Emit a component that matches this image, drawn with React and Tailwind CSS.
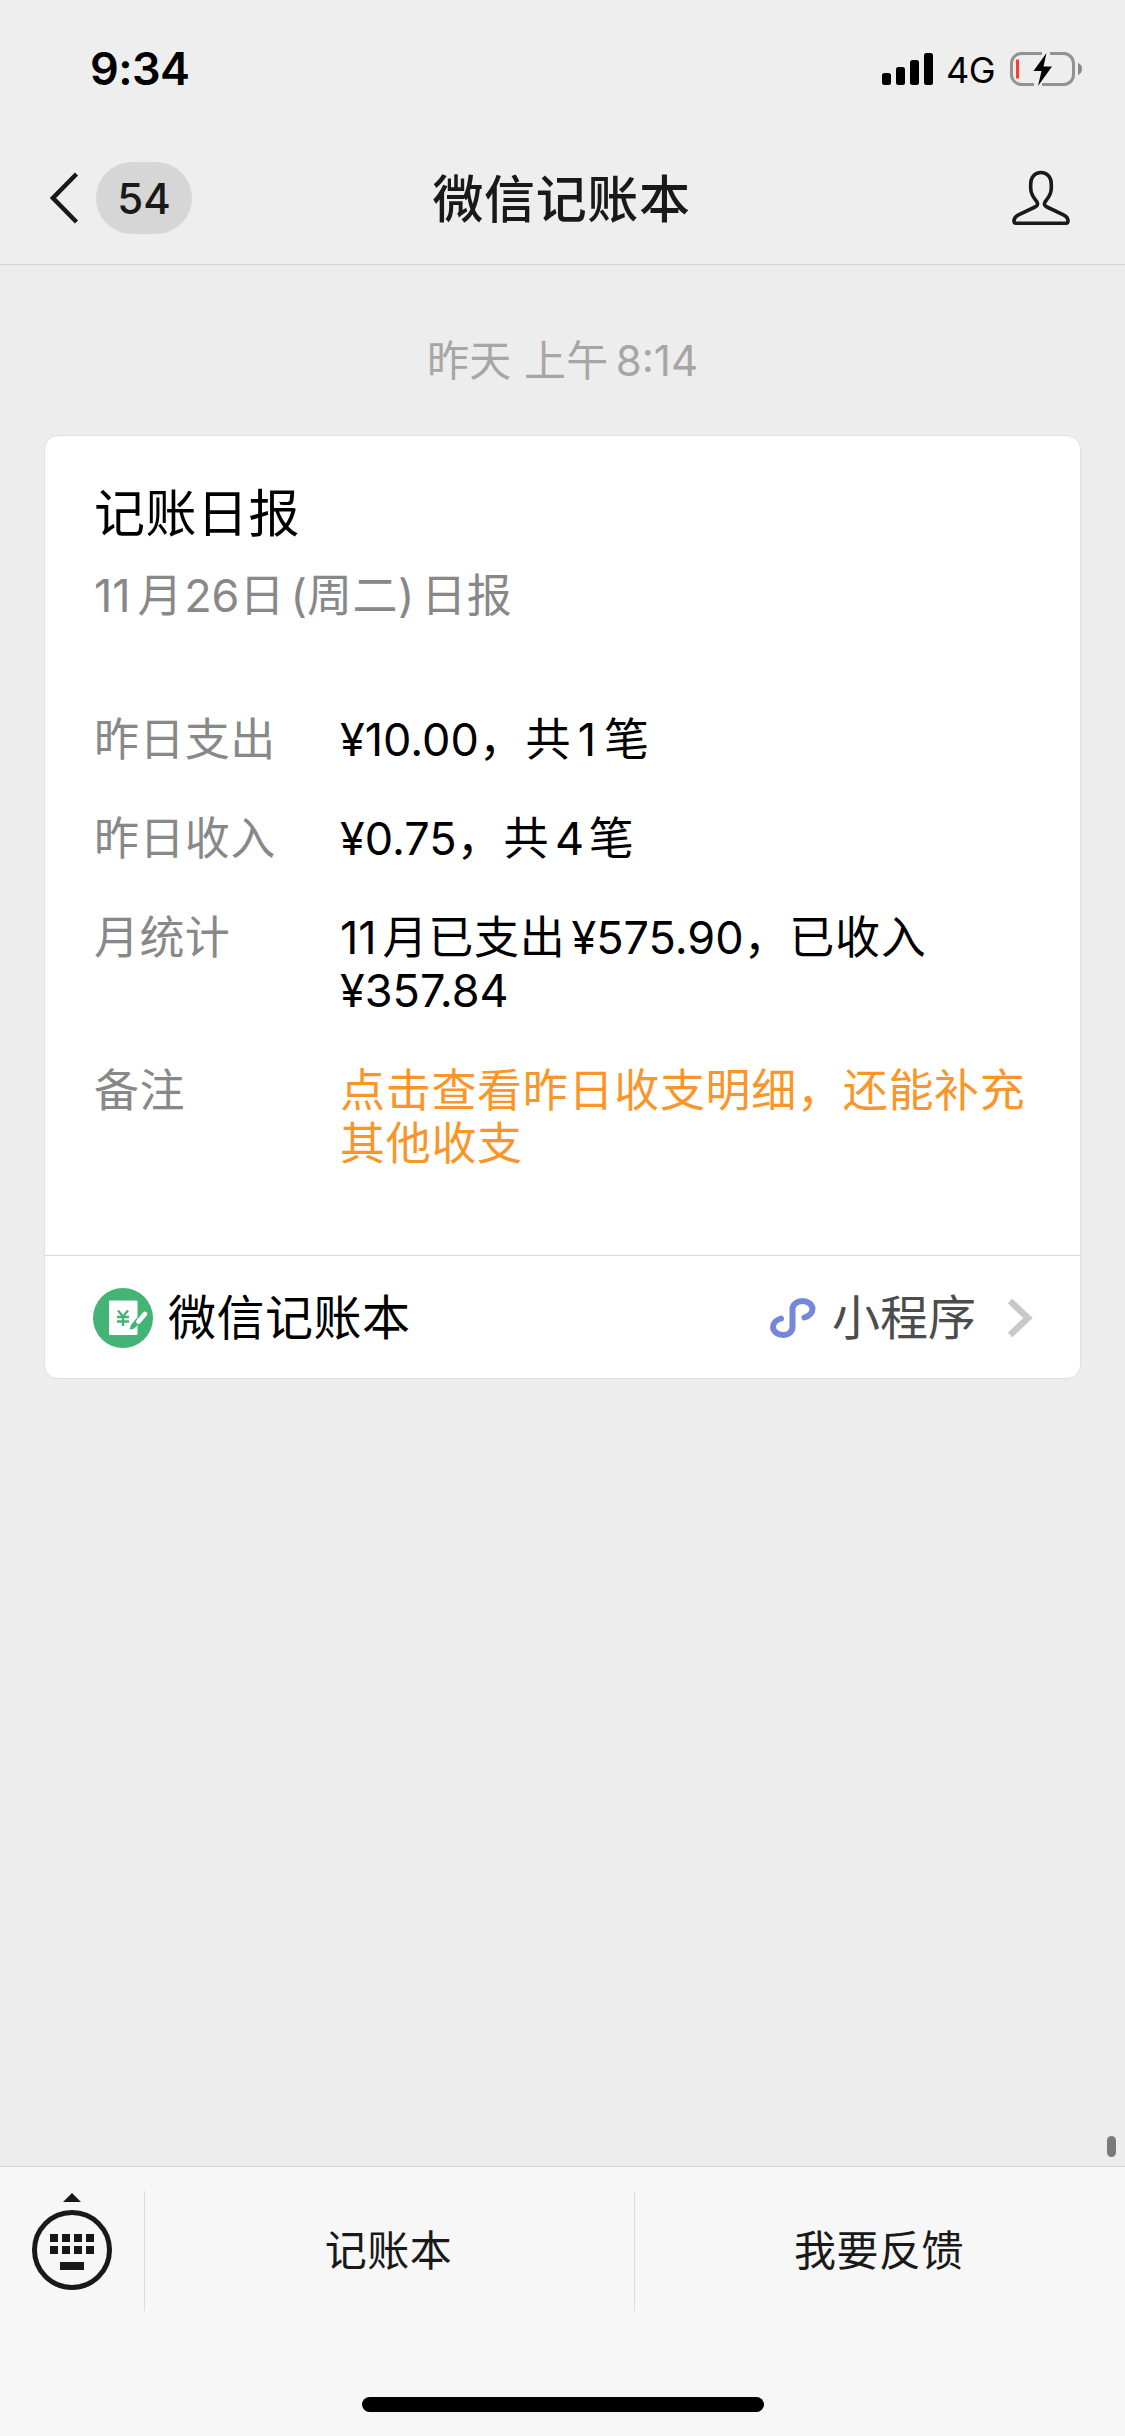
const rows = [
  {
    label: "昨日支出",
    box: "h-[99px]",
    value: <><Latin>¥10.00</Latin>，<span className="ml-[1px]">共</span><Latin className="ml-[6.5px] mr-[8px]">1</Latin>笔</>,
  },
  {
    label: "昨日收入",
    box: "h-[99px]",
    value: <><Latin>¥0.75</Latin>，<span className="ml-[1px]">共</span><Latin className="ml-[6px] mr-[4.5px]">4</Latin>笔</>,
  },
  {
    label: "月统计",
    box: "h-[153px]",
    value: <><Latin className="mr-[6px]">11</Latin>月已支出<Latin className="ml-[6px]">¥575.90</Latin>，已收入<br /><Latin>¥357.84</Latin></>,
  },
  {
    label: "备注",
    box: "h-[144px]",
    accent: true,
    value: <>点击查看昨日收支明细，还能补充<br />其他收支</>,
  },
];

function Latin({ className = "", children }) {
  return <span className={`tracking-normal ${className}`}>{children}</span>;
}

function StatusBar() {
  return (
    <div className="flex h-[132px] items-start justify-between pl-[90px] pr-[42px] pt-[44px]">
      <div className="text-[45px] font-semibold leading-[50px] tracking-[-0.6px] text-black">9:34</div>
      <div className="flex h-[50px] items-center">
        <svg width="51" height="32" viewBox="0 0 51 32" fill="#000">
          <rect x="0" y="20" width="9" height="12" rx="2.5" />
          <rect x="14" y="14" width="9" height="18" rx="2.5" />
          <rect x="28" y="7" width="9" height="25" rx="2.5" />
          <rect x="42" y="0" width="9" height="32" rx="2.5" />
        </svg>
        <span className="ml-[13px] w-[63px] whitespace-nowrap pt-[2px] text-[36px] leading-[50px] tracking-[-0.6px] text-black">4G</span>
        <svg width="74" height="36" viewBox="0 0 74 36">
          <path d="M33 2.500H13A10 10 0 0 0 2.500 12.500V23.500A10 10 0 0 0 13 33.500H25M33 33.500H55A10 10 0 0 0 64.500 23.500V12.500A10 10 0 0 0 55 2.500H41" fill="none" stroke="#929292" strokeWidth="3" />
          <path d="M69 12q4 1.500 4 6t-4 6z" fill="#8a8a8a" />
          <rect x="7" y="8.500" width="3" height="19" rx="0.500" fill="#ff3b30" />
          <path d="M37.500 2L24.500 20h8l-3.500 15L43 15.500h-8.500z" fill="#000" />
        </svg>
      </div>
    </div>
  );
}

function NavBar() {
  return (
    <div className="grid h-[132px] grid-cols-3 items-center pl-[50px] pr-[55px]">
      <div className="flex items-center">
        <svg width="29" height="52" viewBox="0 0 29 52" fill="none" stroke="#191919" strokeWidth="4.500">
          <path d="M26.500 2L3 26l23.500 24" />
        </svg>
        <span className="ml-[17px] flex h-[72px] w-[96px] items-center justify-center rounded-full bg-[#d5d6d5] text-[42px] font-medium text-[#191919]">54</span>
      </div>
      <h1 className="whitespace-nowrap pl-[3px] pt-[2px] text-center text-[51px] font-medium leading-none tracking-[0.6px] text-[#191919]">微信记账本</h1>
      <svg className="justify-self-end" width="58" height="56" viewBox="0 0 58 56" fill="none" stroke="#191919" strokeWidth="3.600" strokeLinejoin="round">
        <path d="M29 2.500C22.500 2.500 18.700 7.500 18.700 14V18C18.700 26 23 28.500 25 32C26.300 34.500 25.300 36 22 37.500L6.500 44.800C3 46.500 2 47.800 2 51C2 52.800 2.300 53.300 4 53.300H54C55.700 53.300 56 52.800 56 51C56 47.800 55 46.500 51.500 44.800L36 37.500C32.700 36 31.700 34.500 33 32C35 28.500 39.300 26 39.300 18V14C39.300 7.500 35.500 2.500 29 2.500Z" />
      </svg>
    </div>
  );
}

function BookLogo() {
  return (
    <svg width="60" height="60" viewBox="0 0 60 60">
      <circle cx="30" cy="30" r="30" fill="#43b376" />
      <rect x="16" y="12.500" width="28.500" height="34.500" rx="1" fill="#fff" />
      <path d="M25 22.500l5 6l5-6M24 29h12M24 33.500h12M30 28.500v9.500" fill="none" stroke="#43b376" strokeWidth="2.300" />
      <path d="M36.500 41.500l1.500-4.500L44.500 29v8.500L40.500 41z" fill="#43b376" />
      <path d="M45.500 33.500l6.500-7.500" stroke="#fff" strokeWidth="4.800" strokeLinecap="round" />
    </svg>
  );
}

export default function App() {
  return (
    <div className="flex h-[2436px] w-[1125px] flex-col overflow-hidden bg-[#ededed] font-['Inter','Noto_Sans_CJK_SC',sans-serif]">
      <header className="h-[265px] border-b border-[#d3d3d3] bg-[#eeeeee]">
        <StatusBar />
        <NavBar />
      </header>

      <main className="relative grow px-[44px]">
        <div className="flex h-[170px] items-center justify-center pt-[22px] text-[42px] leading-none text-[#a6a6a6]">
          <p className="tracking-[0.4px]">昨天 上午<Latin className="ml-[7px]">8:14</Latin></p>
        </div>
        <section className="h-[944px] rounded-[14px] border border-[#e0e0e0] bg-white">
          <div className="h-[819px] px-[49px] pt-[45px]">
            <h2 className="text-[51px] leading-[66px] tracking-[0.5px] text-black">记账日报</h2>
            <p className="mt-[16px] text-[45px] leading-[66px] tracking-[0.5px] text-[#888888]">
              <Latin className="mr-[7px]">11</Latin>月<Latin className="ml-[1px]">26</Latin>日<Latin className="ml-[5.5px]">(</Latin>周二<Latin className="mr-[7px]">)</Latin>日报
            </p>
            <div className="mt-[84px] text-[45px] leading-[53px] tracking-[0.7px]">
              {rows.map((row) => (
                <div key={row.label} className={`flex ${row.box}`}>
                  <div className="w-[246px] shrink-0 tracking-[0.4px] text-[#888888]">{row.label}</div>
                  <div className={`whitespace-nowrap ${row.accent ? "text-[#fa9629]" : "text-black"}`}>{row.value}</div>
                </div>
              ))}
            </div>
          </div>
          <div className="flex h-[123px] items-center border-t border-[#d9d9d9] pl-[48px] pr-[47px] pt-[2px]">
            <BookLogo />
            <span className="ml-[15px] text-[48px] leading-none tracking-[0.5px] text-black">微信记账本</span>
            <svg className="ml-auto" width="46" height="40" viewBox="0 0 46 40" fill="none" stroke="#7586db" strokeWidth="6" strokeLinecap="round">
              <path d="M11 20.500C6 22 3 25.500 3 29c0 4.500 4.500 8 10 8s9.500-3.500 9.500-8V11c0-4.500 4.500-8 10-8s10 3.500 10 8c0 3.500-3 7-8 8.500" />
            </svg>
            <span className="ml-[16px] text-[48px] leading-none text-[#4c4c4c]">小程序</span>
            <svg className="ml-[31px]" width="26" height="40" viewBox="0 0 26 40" fill="none" stroke="#c7c7cc" strokeWidth="6.500">
              <path d="M3 3l18 17L3 37" />
            </svg>
          </div>
        </section>
        <div className="absolute bottom-[9px] right-[9px] h-[21px] w-[9px] rounded-full bg-[#7a7a7a]" />
      </main>

      <footer className="h-[270px] border-t border-[#d3d3d3] bg-[#f7f7f7]">
        <div className="flex h-[167px] items-center text-[42px] leading-none tracking-[0.5px] text-[#191919]">
          <div className="flex w-[144px] justify-center">
            <svg className="mb-[17px]" width="80" height="98" viewBox="0 0 80 98" fill="#191919">
              <path d="M40 0l9 9H31z" />
              <circle cx="40" cy="57" r="37.500" fill="none" stroke="#191919" strokeWidth="5" />
              <path d="M18 41h8v8h-8zM30 41h8v8h-8zM42 41h8v8h-8zM54 41h8v8h-8zM18 53h8v8h-8zM30 53h8v8h-8zM42 53h8v8h-8zM54 53h8v8h-8zM28 69h24v8H28z" />
            </svg>
          </div>
          <div className="flex h-[120px] w-[490px] items-center justify-center border-l border-[#dcdcdc] pr-[2px]">记账本</div>
          <div className="flex h-[120px] grow items-center justify-center border-l border-[#dcdcdc] pr-[2px]">我要反馈</div>
        </div>
        <div className="mx-auto mt-[63px] h-[15px] w-[402px] rounded-full bg-black" />
      </footer>
    </div>
  );
}
